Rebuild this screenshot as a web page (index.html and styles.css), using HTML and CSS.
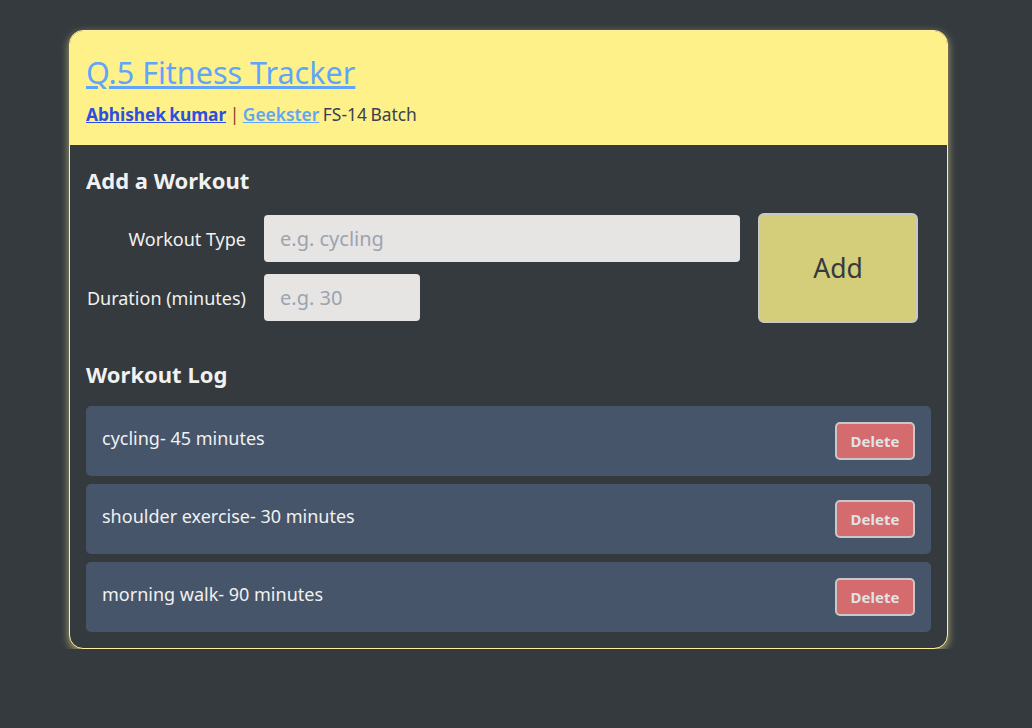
FILE: index.html
```html
<!DOCTYPE html>
<html>
<head>
<meta charset="utf-8">
<link rel="stylesheet" href="styles.css">
</head>
<body>
<div class="card">
  <header class="head">
    <h1 class="title"><a href="#">Q.5 Fitness Tracker</a></h1>
    <p class="sub"><a class="author" href="#">Abhishek kumar</a> <span class="sep">|</span> <a class="org" href="#">Geekster</a> FS-14 Batch</p>
  </header>
  <main class="content">
    <h2 class="sec">Add a Workout</h2>
    <div class="form">
      <div class="fields">
        <div class="row">
          <label class="lbl">Workout Type</label>
          <input class="inp wide" type="text" placeholder="e.g. cycling">
        </div>
        <div class="row">
          <label class="lbl">Duration (minutes)</label>
          <input class="inp short" type="text" placeholder="e.g. 30">
        </div>
      </div>
      <button class="add">Add</button>
    </div>
    <h2 class="sec log-title">Workout Log</h2>
    <ul class="log">
      <li class="item"><span>cycling- 45 minutes</span><button class="del">Delete</button></li>
      <li class="item"><span>shoulder exercise- 30 minutes</span><button class="del">Delete</button></li>
      <li class="item"><span>morning walk- 90 minutes</span><button class="del">Delete</button></li>
    </ul>
  </main>
</div>
</body>
</html>
```
FILE: styles.css
```css
* { box-sizing: border-box; }
body {
  margin: 0;
  background: #343a3e;
  font-family: "Noto Sans", "Open Sans", sans-serif;
  padding-top: 30px;
}
.card {
  width: 879px;
  margin-left: 69px;
  border: 1px solid #fff0a0;
  border-radius: 14px;
  overflow: hidden;
  background: #343a3e;
  box-shadow: 0 3px 8px rgba(255, 240, 150, 0.6);
}
.head {
  background: #fff18a;
  padding: 21px 16px 0;
  height: 114px;
}
.title {
  margin: 0;
  font-size: 30.5px;
  font-weight: 400;
  line-height: 40px;
}
.title a { color: #60a5fa; }
.sub {
  margin: 10px 0 0;
  font-size: 17.4px;
  line-height: 24px;
  color: #374151;
  word-spacing: -1px;
}
.author { color: #2c4fe0; font-weight: 700; letter-spacing: -0.1px; }
.sep { color: #8b3a2a; }
.org { color: #60a5fa; font-weight: 600; }
.content { padding: 19px 16px 16px; }
.sec {
  margin: 0;
  font-size: 22px;
  font-weight: 700;
  line-height: 32px;
  color: #f1f1f1;
}
.form {
  display: flex;
  align-items: flex-start;
  gap: 18px;
  margin-top: 17px;
}
.fields {
  display: flex;
  flex-direction: column;
  gap: 12px;
  padding-top: 2px;
}
.row {
  display: flex;
  align-items: center;
  gap: 18px;
}
.lbl {
  width: 160px;
  text-align: right;
  color: #f1f1f1;
  font-size: 18px;
  white-space: nowrap;
}
.inp {
  height: 47px;
  border: none;
  border-radius: 4px;
  background: #e6e5e3;
  padding: 0 16px;
  font-family: inherit;
  font-size: 20px;
  color: #333;
}
.inp::placeholder { color: #9ca3af; }
.wide { width: 476px; }
.short { width: 156px; }
.add {
  width: 160px;
  height: 110px;
  background: #d4cd7a;
  border: 2px solid #c8c8c8;
  border-radius: 6px;
  font-family: inherit;
  font-size: 26.5px;
  color: #343a40;
}
.log-title { margin-top: 35px; }
.log {
  list-style: none;
  margin: 16px 0 0;
  padding: 0;
  display: flex;
  flex-direction: column;
  gap: 8px;
}
.item {
  background: #465569;
  border-radius: 5px;
  height: 70px;
  padding: 16px 16px 0;
  display: flex;
  justify-content: space-between;
  align-items: flex-start;
  color: #f1f1f1;
  font-size: 18px;
  line-height: 32px;
}
.del {
  width: 80px;
  height: 38px;
  background: #d46b6e;
  border: 2px solid #c8c8c8;
  border-radius: 5px;
  color: #e2e2e2;
  font-family: inherit;
  font-weight: 700;
  font-size: 15px;
}
```
